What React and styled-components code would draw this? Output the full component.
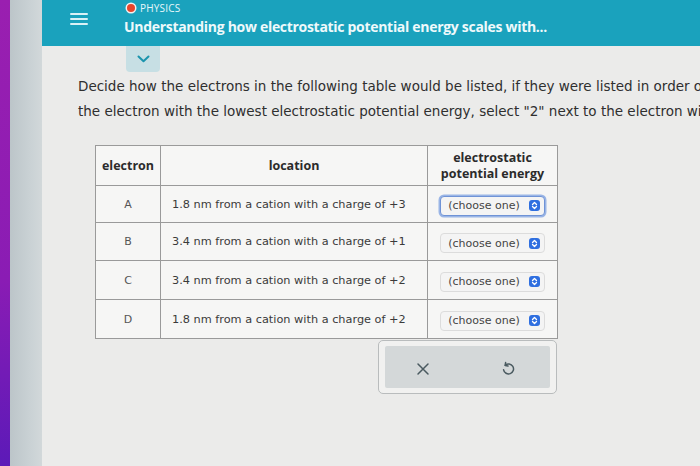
import React from "react";
import styled, { createGlobalStyle } from "styled-components";

const Global = createGlobalStyle`
  html, body { margin: 0; padding: 0; }
  body { width: 700px; height: 466px; overflow: hidden; background: #e9e9e8; font-family: "Open Sans", "Liberation Sans", sans-serif; }
  #root { height: 466px; }
`;

const Screen = styled.div`
  display: flex;
  width: 700px;
  height: 466px;
  overflow: hidden;
`;

const PurpleStrip = styled.div`
  width: 10px;
  flex: none;
  background: linear-gradient(180deg, #9a1fb0 0%, #8a1cb4 60%, #5c1ab8 100%);
`;

const SideStrip = styled.div`
  width: 32px;
  flex: none;
  background: linear-gradient(90deg, #bcc5c9 0%, #c9d1d4 60%, #d2d8da 100%);
`;

const Main = styled.div`
  flex: 1;
  display: flex;
  flex-direction: column;
  background: #ebebea;
  min-width: 0;
`;

const Header = styled.header`
  height: 46px;
  flex: none;
  box-sizing: border-box;
  background: #1aa2bd;
  display: flex;
  align-items: flex-start;
  padding: 2px 0 0 28px;
  gap: 36px;
`;

const Burger = styled.div`
  display: flex;
  flex-direction: column;
  gap: 3px;
  width: 18px;
  margin-top: 11px;
  span {
    display: block;
    height: 2px;
    border-radius: 1px;
    background: #d9f1f6;
  }
`;

const TitleBlock = styled.div`
  display: flex;
  flex-direction: column;
  gap: 3px;
`;

const Subject = styled.div`
  display: flex;
  align-items: center;
  gap: 5px;
  font-size: 10px;
  color: #e8f7fa;
  letter-spacing: 0.2px;
  line-height: 12px;
  margin-left: 3px;
`;

const Dot = styled.span`
  width: 8px;
  height: 8px;
  border-radius: 50%;
  background: #e8452c;
  box-shadow: 0 0 0 1.5px #f2f2f2;
`;

const Title = styled.div`
  font-size: 14px;
  font-weight: 700;
  color: #eef9fb;
  letter-spacing: -0.3px;
  line-height: 19px;
  white-space: nowrap;
`;

const Content = styled.div`
  flex: 1;
  display: flex;
  flex-direction: column;
`;

const Tab = styled.div`
  margin-left: 84px;
  width: 34px;
  height: 26px;
  background: #c7dfe4;
  border-radius: 0 0 4px 4px;
  display: flex;
  align-items: center;
  justify-content: center;
`;

const Prompt = styled.p`
  margin: 2px 0 0 36px;
  font-family: "DejaVu Sans", "Verdana", sans-serif;
  font-size: 13.5px;
  line-height: 25px;
  color: #2f2f2f;
  white-space: nowrap;
`;

const Table = styled.table`
  margin: 21px 0 0 53px;
  border-collapse: collapse;
  width: 463px;
  color: #333;
  background: #f6f6f5;
  td, th {
    border: 1px solid #9a9a9a;
    text-align: center;
    padding: 0;
  }
`;

const HeadCell = styled.th`
  height: 39px;
  font-weight: 700;
  font-size: 12.5px;
  line-height: 16px;
  color: #2b2b2b;
  width: ${(p) => p.$w}px;
`;

const Row = styled.tr`
  height: ${(p) => p.$h}px;
`;

const LocCell = styled.td`
  && { text-align: left; padding-left: 11px; }
  font-family: "DejaVu Sans", "Verdana", sans-serif;
  font-size: 11.3px;
  color: #3a3a3a;
`;

const LetterCell = styled.td`
  font-family: "DejaVu Sans", "Verdana", sans-serif;
  font-size: 11px;
  color: #555;
`;

const Select = styled.div`
  display: inline-flex;
  align-items: center;
  gap: 9px;
  height: 18px;
  padding: 0 4px 0 7px;
  border-radius: 4px;
  font-family: "DejaVu Sans", "Verdana", sans-serif;
  font-size: 11px;
  color: #444;
  background: #f4f4f4;
  border: 1px solid ${(p) => (p.$focus ? "#6f93d6" : "#dcdcdc")};
  box-shadow: ${(p) => (p.$focus ? "0 0 0 1.5px #9ab5e6" : "none")};
`;

const Stepper = styled.span`
  width: 11px;
  height: 11px;
  border-radius: 3px;
  background: #2f6fe0;
  display: flex;
  align-items: center;
  justify-content: center;
`;

const ActionWrap = styled.div`
  margin: 1px 0 0 336px;
  width: 179px;
  height: 54px;
  box-sizing: border-box;
  border: 1px solid #b9bcbd;
  border-radius: 5px;
  background: #f1f1f0;
  padding: 5px 6px;
  display: flex;
`;

const ActionInner = styled.div`
  flex: 1;
  background: #d4d8d9;
  border-radius: 2px;
  display: flex;
  align-items: center;
  justify-content: space-between;
  padding: 0 32px 0 28px;
`;

const IconBtn = styled.div`
  width: 20px;
  height: 20px;
  display: flex;
  align-items: center;
  justify-content: center;
  margin-top: 4px;
`;

const rows = [
  { l: "A", t: "1.8 nm from a cation with a charge of +3", h: 37, f: true },
  { l: "B", t: "3.4 nm from a cation with a charge of +1", h: 38 },
  { l: "C", t: "3.4 nm from a cation with a charge of +2", h: 39 },
  { l: "D", t: "1.8 nm from a cation with a charge of +2", h: 39 },
];

export default function App() {
  return (
    <>
      <Global />
      <Screen>
        <PurpleStrip />
        <SideStrip />
        <Main>
          <Header>
            <Burger>
              <span />
              <span />
              <span />
            </Burger>
            <TitleBlock>
              <Subject>
                <Dot />
                PHYSICS
              </Subject>
              <Title>Understanding how electrostatic potential energy scales with...</Title>
            </TitleBlock>
          </Header>
          <Content>
            <Tab>
              <svg width="13" height="8" viewBox="0 0 13 8">
                <path d="M1.5 1.5 L6.5 6.2 L11.5 1.5" fill="none" stroke="#1b94ad" strokeWidth="2" strokeLinecap="round" strokeLinejoin="round" />
              </svg>
            </Tab>
            <Prompt>
              Decide how the electrons in the following table would be listed, if they were listed in order of increasing electrostatic potential energy.
              <br />
              the electron with the lowest electrostatic potential energy, select "2" next to the electron with the next lowest, and so on.
            </Prompt>
            <Table>
              <thead>
                <tr>
                  <HeadCell $w={64}>electron</HeadCell>
                  <HeadCell $w={266}>location</HeadCell>
                  <HeadCell $w={129}>
                    electrostatic
                    <br />
                    potential energy
                  </HeadCell>
                </tr>
              </thead>
              <tbody>
                {rows.map((r) => (
                  <Row key={r.l} $h={r.h}>
                    <LetterCell>{r.l}</LetterCell>
                    <LocCell>{r.t}</LocCell>
                    <td>
                      <Select $focus={r.f}>
                        (choose one)
                        <Stepper>
                          <svg width="7" height="9" viewBox="0 0 7 9">
                            <path d="M1.5 3.5 L3.5 1.5 L5.5 3.5 M1.5 5.5 L3.5 7.5 L5.5 5.5" fill="none" stroke="#fff" strokeWidth="1.3" strokeLinecap="round" strokeLinejoin="round" />
                          </svg>
                        </Stepper>
                      </Select>
                    </td>
                  </Row>
                ))}
              </tbody>
            </Table>
            <ActionWrap>
              <ActionInner>
                <IconBtn>
                  <svg width="14" height="14" viewBox="0 0 14 14">
                    <path d="M2 2 L12 12 M12 2 L2 12" stroke="#4a5a60" strokeWidth="1.5" strokeLinecap="round" />
                  </svg>
                </IconBtn>
                <IconBtn>
                  <svg width="16" height="16" viewBox="0 0 16 16">
                    <path d="M5.2 4.2 A5 5 0 1 1 3.6 8.8" fill="none" stroke="#4a5a60" strokeWidth="1.5" strokeLinecap="round" />
                    <path d="M5.6 1.6 L5.2 4.4 L8 5" fill="none" stroke="#4a5a60" strokeWidth="1.5" strokeLinecap="round" strokeLinejoin="round" />
                  </svg>
                </IconBtn>
              </ActionInner>
            </ActionWrap>
          </Content>
        </Main>
      </Screen>
    </>
  );
}
